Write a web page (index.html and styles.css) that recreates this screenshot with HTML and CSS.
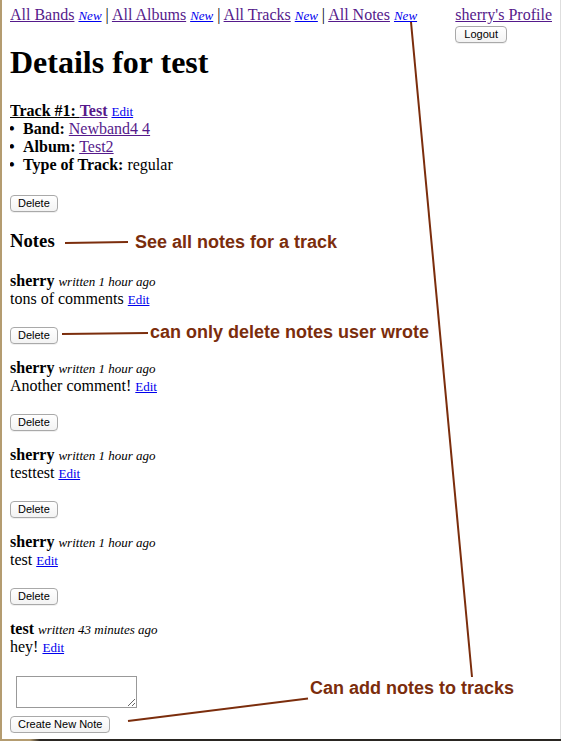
FILE: index.html
```html
<!DOCTYPE html>
<html lang="en">
<head>
<meta charset="utf-8">
<title>Details for test</title>
<link rel="stylesheet" href="styles.css">
</head>
<body>
<header class="topbar">
  <nav class="nav">
    <a href="#" class="link-visited">All Bands</a> <a href="#" class="link-new">New</a> | <a href="#" class="link-visited">All Albums</a> <a href="#" class="link-new">New</a> | <a href="#" class="link-visited">All Tracks</a> <a href="#" class="link-new">New</a> | <a href="#" class="link-visited">All Notes</a> <a href="#" class="link-new">New</a>
  </nav>
  <div class="profile">
    <a href="#" class="link-visited">sherry's Profile</a>
    <button class="btn btn-logout" type="button">Logout</button>
  </div>
</header>

<h1 class="page-title">Details for test</h1>

<div class="track-title"><span class="track-label">Track #1: </span><a href="#" class="link-visited track-name">Test</a> <a href="#" class="link-small">Edit</a></div>
<ul class="facts">
  <li><b>Band:</b> <a href="#" class="link-visited">Newband4 4</a></li>
  <li><b>Album:</b> <a href="#" class="link-visited">Test2</a></li>
  <li><b>Type of Track:</b> regular</li>
</ul>
<button class="btn btn-delete-track" type="button">Delete</button>

<h3 class="notes-heading">Notes</h3>

<div class="note">
  <div class="note-meta"><b>sherry</b> <i>written 1 hour ago</i></div>
  <div class="note-body">tons of comments <a href="#" class="link-small">Edit</a></div>
  <button class="btn btn-note" type="button">Delete</button>
</div>
<div class="note">
  <div class="note-meta"><b>sherry</b> <i>written 1 hour ago</i></div>
  <div class="note-body">Another comment! <a href="#" class="link-small">Edit</a></div>
  <button class="btn btn-note" type="button">Delete</button>
</div>
<div class="note">
  <div class="note-meta"><b>sherry</b> <i>written 1 hour ago</i></div>
  <div class="note-body">testtest <a href="#" class="link-small">Edit</a></div>
  <button class="btn btn-note" type="button">Delete</button>
</div>
<div class="note">
  <div class="note-meta"><b>sherry</b> <i>written 1 hour ago</i></div>
  <div class="note-body">test <a href="#" class="link-small">Edit</a></div>
  <button class="btn btn-note" type="button">Delete</button>
</div>
<div class="note">
  <div class="note-meta"><b>test</b> <i>written 43 minutes ago</i></div>
  <div class="note-body">hey! <a href="#" class="link-small">Edit</a></div>
</div>

<form class="new-note" onsubmit="return false">
  <textarea class="new-note-text"></textarea>
  <button class="btn btn-create" type="submit">Create New Note</button>
</form>

<svg class="annot-lines" width="561" height="741" viewBox="0 0 561 741" aria-hidden="true">
  <line x1="411" y1="22" x2="472" y2="677"/>
  <line x1="65" y1="243" x2="128" y2="242"/>
  <line x1="62" y1="334" x2="148" y2="333"/>
  <line x1="128" y1="721" x2="308" y2="698.5"/>
</svg>
<div class="annot annot-notes">See all notes for a track</div>
<div class="annot annot-delete">can only delete notes user wrote</div>
<div class="annot annot-add">Can add notes to tracks</div>
<div class="frame-bottom"></div>
</body>
</html>
```

FILE: styles.css
```css
html {
  border-left: 2px solid #b49c70;
  border-right: 1px solid #dedede;
  min-height: 100%;
  box-sizing: border-box;
  background: #fff;
}

body {
  margin: 6px 8px 0 8px;
  font-family: "Liberation Serif", "Times New Roman", serif;
  font-size: 16px;
  line-height: normal;
  color: #000;
}

a {
  text-decoration: underline;
}

.link-visited {
  color: #551a8b;
}

.link-new {
  color: #0000ee;
  font-style: italic;
  font-size: 13px;
  line-height: 14px;
}

.link-small {
  color: #0000ee;
  font-size: 13px;
  line-height: 14px;
}

.topbar {
  display: flex;
  justify-content: space-between;
  align-items: flex-start;
}

.profile {
  display: flex;
  flex-direction: column;
  align-items: flex-start;
}

.btn {
  font-family: "Liberation Sans", Arial, sans-serif;
  font-size: 11px;
  color: #000;
  height: 17px;
  line-height: 15px;
  padding: 0 7px;
  border: 1px solid #a9a9a9;
  border-radius: 4px;
  background: linear-gradient(#ffffff, #f3f3f3);
  box-shadow: 0 1px 0 rgba(0, 0, 0, 0.06);
  box-sizing: border-box;
  display: block;
  margin: 0;
}

.btn-logout {
  margin-top: 1.6px;
  padding: 0 8px;
}

.page-title {
  font-size: 32px;
  font-weight: bold;
  margin: 1px 0 21.4px 0;
  line-height: normal;
}

.track-title {
  font-weight: bold;
}

.track-label {
  text-decoration: underline;
}

.track-name {
  font-weight: bold;
}

.track-title .link-small {
  font-weight: normal;
}

.facts {
  list-style: none;
  margin: 0;
  padding: 0;
}

.facts li::before {
  content: "\2022";
  display: inline-block;
  width: 14px;
  margin-left: -1px;
  font-weight: bold;
}

.btn-delete-track {
  margin-top: 21.3px;
}

.notes-heading {
  font-size: 18.72px;
  font-weight: bold;
  margin: 18.2px 0 20px 0;
}

.note {
  display: flex;
  flex-direction: column;
  align-items: flex-start;
  margin-bottom: 15px;
}

.note-meta,
.note-body {
  line-height: 18px;
}

.note-meta i {
  font-size: 13px;
  line-height: 14px;
}

.btn-note {
  margin-top: 19px;
}

.new-note {
  display: flex;
  flex-direction: column;
  align-items: flex-start;
  margin-top: 19.5px;
}

.new-note-text {
  width: 121px;
  height: 32px;
  box-sizing: border-box;
  margin: 0 0 0 6px;
  border: 1px solid #999;
  padding: 2px;
  font-family: "Liberation Mono", monospace;
  font-size: 13px;
}

.btn-create {
  margin-top: 8px;
}

.annot-lines {
  position: absolute;
  left: 0;
  top: 0;
  pointer-events: none;
}

.annot-lines line {
  stroke: #7b2d0c;
  stroke-width: 2;
}

.annot {
  position: absolute;
  font-family: "Liberation Sans", Arial, sans-serif;
  font-weight: bold;
  font-size: 18px;
  line-height: 18px;
  color: #7b2d0c;
  white-space: nowrap;
}

.annot-notes {
  left: 135px;
  top: 233px;
}

.annot-delete {
  left: 150px;
  top: 323px;
}

.annot-add {
  left: 310px;
  top: 679px;
}

.frame-bottom {
  position: fixed;
  left: 0;
  right: 0;
  bottom: 0;
  height: 2px;
  background: linear-gradient(90deg, #b49c70 0, #b49c70 30px, #2a2622 40px, #2a2622 100%);
}
```
